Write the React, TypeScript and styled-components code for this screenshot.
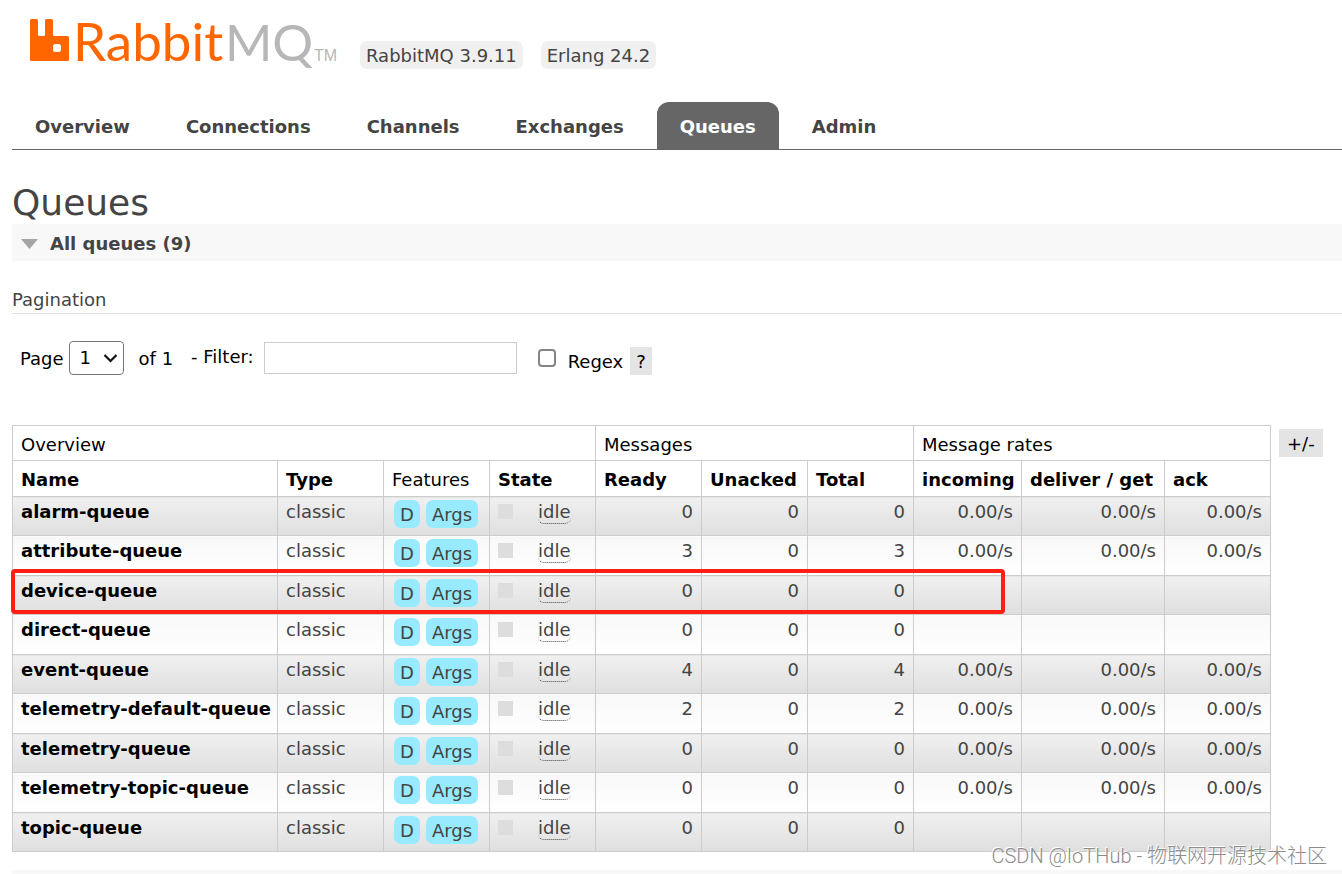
import React from "react";
import styled, { createGlobalStyle } from "styled-components";

const GlobalStyle = createGlobalStyle`
  *, *::before, *::after { box-sizing: border-box; }
  body {
    margin: 0;
    background: #fff;
    color: #444;
    font: 18px/24px Verdana, "DejaVu Sans", sans-serif;
  }
  button, input, select { font: inherit; color: #000; }
`;

const Page = styled.div`
  position: relative;
  overflow-x: hidden;
  padding-left: 12px;
`;

const Header = styled.header`
  display: flex;
  align-items: flex-end;
  height: 69px;
`;

const LogoLink = styled.a`
  display: block;
  width: 330px;
  height: 69px;
  margin-right: 18px;
  flex: none;
`;

const Badge = styled.span`
  height: 28px;
  padding: 3px 6px 1px;
  margin-right: 18px;
  border-radius: 7px;
  background: #f0f0f0;
  white-space: nowrap;
`;

const Nav = styled.nav`
  margin-top: 33px;
  border-bottom: 1px solid #666;
`;

const Tabs = styled.ul`
  display: flex;
  gap: 10px;
  margin: 0;
  padding: 0;
  list-style: none;
`;

const Tab = styled.a<{ $active?: boolean }>`
  display: block;
  height: 47px;
  padding: 13px 23px 10px;
  border-radius: 12px 12px 0 0;
  background: ${(p) => (p.$active ? "#666" : "transparent")};
  color: ${(p) => (p.$active ? "#fff" : "#444")};
  font-weight: bold;
  text-decoration: none;
`;

const Title = styled.h1`
  margin: 32px 0 0;
  font-size: 36px;
  line-height: 42px;
  font-weight: normal;
`;

const SectionHead = styled.h2`
  display: flex;
  align-items: center;
  gap: 12px;
  height: 37px;
  margin: 0;
  padding: 2px 9px 0;
  background: #f8f8f8;
  font-size: 18px;
`;

const Caret = styled.svg`
  width: 17px;
  height: 10px;
`;

const SubHead = styled.h3`
  height: 26px;
  margin: 27px 0 0;
  border-bottom: 1px solid #e4e4e4;
  font-size: 18px;
  font-weight: normal;
`;

const Controls = styled.form`
  display: flex;
  align-items: center;
  height: 34px;
  margin-top: 27px;
  padding-left: 8px;
  color: #000;
  white-space: nowrap;
`;

const PageField = styled.label`
  display: flex;
  align-items: center;
  gap: 5px;
`;

const ControlText = styled.span`
  padding-top: 2px;
`;

const SelectBox = styled.span`
  position: relative;
  display: block;
`;

const PageSelect = styled.select`
  appearance: none;
  display: block;
  width: 55px;
  height: 34px;
  padding: 0 10px;
  border: 1px solid #767676;
  border-radius: 4px;
  background: #fff;
`;

const SelectArrow = styled.svg`
  position: absolute;
  right: 6px;
  top: 12px;
  width: 15px;
  height: 11px;
  pointer-events: none;
`;

const OfPages = styled(ControlText)`
  margin: 0 18px 0 15px;
`;

const FilterField = styled.label`
  display: flex;
  align-items: center;
  gap: 10px;
  margin-right: 21px;
`;

const FilterLabel = styled.span`
  padding-bottom: 2px;
`;

const FilterInput = styled.input`
  width: 253px;
  height: 32px;
  padding: 4px;
  border: 1px solid #ccc;
`;

const RegexField = styled.label`
  display: flex;
  align-items: center;
  gap: 12px;
  margin-right: 7px;
`;

const RegexLabel = styled.span`
  padding-top: 8px;
`;

const CheckBox = styled.input`
  appearance: none;
  width: 18px;
  height: 18px;
  margin: 0;
  border: 2px solid #858585;
  border-radius: 4px;
  background: #fff;
  &:checked { background: #666; }
`;

const GreyButton = styled.button`
  height: 28px;
  padding: 2px 6px 0;
  border: 0;
  background: #e4e4e4;
  line-height: 26px;
  cursor: pointer;
`;

const HelpButton = styled(GreyButton)`
  align-self: flex-end;
`;

const ListArea = styled.div`
  display: flex;
  align-items: flex-start;
  gap: 8px;
  margin-top: 50px;
`;

const ColumnsButton = styled(GreyButton)`
  margin-top: 4px;
  padding: 2px 8px 0;
`;

const TableWrap = styled.div`
  position: relative;
  flex: none;
`;

const Table = styled.table`
  width: 1259px;
  table-layout: fixed;
  border-collapse: collapse;
  th, td {
    padding: 0 8px;
    border: 1px solid #ccc;
    text-align: left;
    white-space: nowrap;
  }
  th { color: #000; }
  thead tr { height: 36px; }
  thead tr:first-child { height: 35px; }
  thead th { padding-top: 2px; }
  thead tr:first-child th { padding-top: 4px; }
  tbody th, tbody td {
    padding-top: 3px;
    vertical-align: top;
  }
  tbody tr:nth-child(odd) { height: 39px; }
  tbody tr:nth-child(even) { height: 40px; }
  tbody tr:nth-child(odd) > * { background: linear-gradient(#f0f0f0, #dfdfdf); }
  tbody tr:nth-child(even) > * { background: linear-gradient(#f8f8f8, #fff); }
`;

const Plain = styled.th`
  font-weight: normal;
`;

const SortLink = styled.a`
  color: #000;
  text-decoration: none;
`;

const Num = styled.td`
  && { text-align: right; }
`;

const Features = styled.div`
  display: flex;
  gap: 6px;
  padding-left: 2px;
`;

const Tag = styled.abbr`
  height: 28px;
  padding: 3px 6px 1px;
  border-radius: 7px;
  background: #98ebff;
  text-decoration: none;
`;

const State = styled.div`
  display: flex;
  align-items: flex-start;
`;

const Square = styled.span`
  width: 15px;
  height: 15px;
  margin: 4px 25px 0 0;
  background: #ddd;
`;

const StateText = styled.span`
  height: 24px;
  border-bottom: 1px dotted #444;
  border-radius: 6px;
`;

const Highlight = styled.div`
  position: absolute;
  left: -1px;
  top: 144px;
  width: 994px;
  height: 45px;
  border: 4px solid #ff1f14;
  border-radius: 4px;
  pointer-events: none;
`;

const FooterRule = styled.footer`
  height: 4px;
  margin-top: 18px;
  background: #f8f8f8;
`;

const Watermark = styled.div`
  position: absolute;
  right: 15px;
  bottom: 4px;
  color: #8c8c8c;
  font: 300 20px/28px Roboto, "Noto Sans CJK SC", sans-serif;
  text-shadow: -1px -1px 0 #fff;
  white-space: nowrap;
`;

const tabs = ["Overview", "Connections", "Channels", "Exchanges", "Queues", "Admin"];

const columnWidths = [265, 106, 106, 106, 106, 106, 106, 108, 143, 106];

const queues = [
  { name: "alarm-queue", ready: 0, total: 0, rates: true },
  { name: "attribute-queue", ready: 3, total: 3, rates: true },
  { name: "device-queue", ready: 0, total: 0, rates: false },
  { name: "direct-queue", ready: 0, total: 0, rates: false },
  { name: "event-queue", ready: 4, total: 4, rates: true },
  { name: "telemetry-default-queue", ready: 2, total: 2, rates: true },
  { name: "telemetry-queue", ready: 0, total: 0, rates: true },
  { name: "telemetry-topic-queue", ready: 0, total: 0, rates: true },
  { name: "topic-queue", ready: 0, total: 0, rates: false },
];

function Logo() {
  return (
    <LogoLink href="#" aria-label="RabbitMQ">
      <svg width="330" height="80" viewBox="12 0 330 80">
        <path
          fill="#f60"
          fillRule="evenodd"
          d="M31.500 19H36.500Q38 19 38 20.500V34.500Q38 36 39.500 36H43.500Q45 36 45 34.500V20.500Q45 19 46.500 19H51.500Q53 19 53 20.500V34.500Q53 36 54.500 36H67.500Q69 36 69 37.500V59.500Q69 61 67.500 61H31.500Q30 61 30 59.500V20.500Q30 19 31.500 19ZM55.500 44Q53 44 53 46.500V49.500Q53 52 55.500 52H58.500Q61 52 61 49.500V46.500Q61 44 58.500 44Z"
        />
        <g fontFamily="Lato, sans-serif">
          <text x="73" y="61" fontSize="53" fill="#f60">Rabbit</text>
          <text x="225" y="61" fontSize="51" fill="#b7b7b7">MQ</text>
        </g>
        <text x="314" y="61" fill="#b7b7b7" fontFamily="'Liberation Sans', sans-serif" fontSize="16">TM</text>
      </svg>
    </LogoLink>
  );
}

export default function App() {
  return (
    <>
      <GlobalStyle />
      <Page>
        <Header>
          <Logo />
          <Badge>RabbitMQ 3.9.11</Badge>
          <Badge>Erlang 24.2</Badge>
        </Header>
        <Nav>
          <Tabs>
            {tabs.map((t) => (
              <li key={t}>
                <Tab href="#" $active={t === "Queues"}>{t}</Tab>
              </li>
            ))}
          </Tabs>
        </Nav>
        <main>
          <Title>Queues</Title>
          <SectionHead>
            <Caret viewBox="0 0 17 10" aria-hidden="true">
              <path d="M0 0h17L8.500 10z" fill="#a5a5a5" />
            </Caret>
            All queues (9)
          </SectionHead>
          <SubHead>Pagination</SubHead>
          <Controls>
            <PageField>
              <ControlText>Page</ControlText>
              <SelectBox>
                <PageSelect defaultValue="1">
                  <option value="1">1</option>
                </PageSelect>
                <SelectArrow viewBox="0 0 15 11" aria-hidden="true">
                  <path d="M1.500 2l6 6 6-6" fill="none" stroke="#111" strokeWidth="2.200" />
                </SelectArrow>
              </SelectBox>
            </PageField>
            <OfPages>of 1</OfPages>
            <FilterField>
              <FilterLabel>- Filter:</FilterLabel>
              <FilterInput type="text" />
            </FilterField>
            <RegexField>
              <CheckBox type="checkbox" />
              <RegexLabel>Regex</RegexLabel>
            </RegexField>
            <HelpButton type="button">?</HelpButton>
          </Controls>
          <ListArea>
            <TableWrap>
              <Table>
                <colgroup>
                  {columnWidths.map((w, i) => (
                    <col key={i} width={w} />
                  ))}
                </colgroup>
                <thead>
                  <tr>
                    <Plain colSpan={4}>Overview</Plain>
                    <Plain colSpan={3}>Messages</Plain>
                    <Plain colSpan={3}>Message rates</Plain>
                  </tr>
                  <tr>
                    <th><SortLink href="#">Name</SortLink></th>
                    <th><SortLink href="#">Type</SortLink></th>
                    <Plain>Features</Plain>
                    {["State", "Ready", "Unacked", "Total", "incoming", "deliver / get", "ack"].map((h) => (
                      <th key={h}><SortLink href="#">{h}</SortLink></th>
                    ))}
                  </tr>
                </thead>
                <tbody>
                  {queues.map((q) => (
                    <tr key={q.name}>
                      <th scope="row"><SortLink href="#">{q.name}</SortLink></th>
                      <td>classic</td>
                      <td>
                        <Features>
                          <Tag>D</Tag>
                          <Tag>Args</Tag>
                        </Features>
                      </td>
                      <td>
                        <State>
                          <Square />
                          <StateText>idle</StateText>
                        </State>
                      </td>
                      <Num>{q.ready}</Num>
                      <Num>0</Num>
                      <Num>{q.total}</Num>
                      {[0, 1, 2].map((i) => (
                        <Num key={i}>{q.rates ? "0.00/s" : ""}</Num>
                      ))}
                    </tr>
                  ))}
                </tbody>
              </Table>
              <Highlight />
            </TableWrap>
            <ColumnsButton type="button">+/-</ColumnsButton>
          </ListArea>
        </main>
        <FooterRule />
        <Watermark>CSDN @IoTHub - 物联网开源技术社区</Watermark>
      </Page>
    </>
  );
}
